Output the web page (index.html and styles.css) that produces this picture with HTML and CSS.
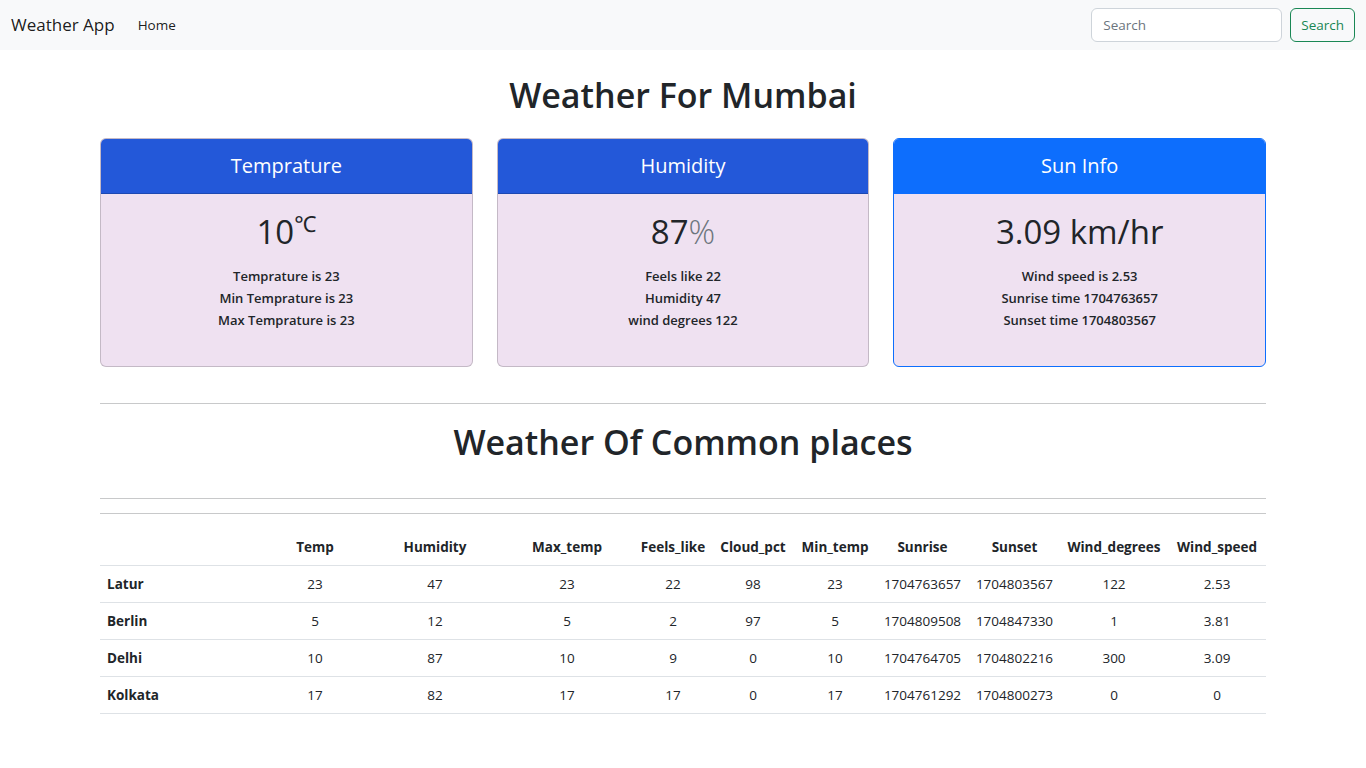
FILE: index.html
```html
<!DOCTYPE html>
<html lang="en">
<head>
<meta charset="utf-8">
<title>Weather App</title>
<link rel="stylesheet" href="styles.css">
</head>
<body>
<nav class="navbar">
  <div class="nav-left">
    <a class="brand" href="#">Weather App</a>
    <a class="nav-link" href="#">Home</a>
  </div>
  <form class="search-form">
    <input class="search-input" type="search" placeholder="Search">
    <button class="search-btn" type="button">Search</button>
  </form>
</nav>

<main class="container">
  <h1 class="page-title">Weather For Mumbai</h1>
  <div class="cards">
    <div class="card">
      <div class="card-header">Temprature</div>
      <div class="card-body">
        <div class="big">10<sup class="unit">℃</sup></div>
        <p class="details">Temprature is 23<br>Min Temprature is 23<br>Max Temprature is 23</p>
      </div>
    </div>
    <div class="card">
      <div class="card-header">Humidity</div>
      <div class="card-body">
        <div class="big">87<span class="muted">%</span></div>
        <p class="details">Feels like 22<br>Humidity 47<br>wind degrees 122</p>
      </div>
    </div>
    <div class="card card-primary">
      <div class="card-header">Sun Info</div>
      <div class="card-body">
        <div class="big">3.09 km/hr</div>
        <p class="details">Wind speed is 2.53<br>Sunrise time 1704763657<br>Sunset time 1704803567</p>
      </div>
    </div>
  </div>

  <hr class="rule rule-top">
  <h1 class="page-title second">Weather Of Common places</h1>
  <hr class="rule rule-mid">

  <table class="weather-table">
    <colgroup>
      <col style="width:160px"><col style="width:110px"><col style="width:130px"><col style="width:134px">
      <col style="width:78px"><col style="width:82px"><col style="width:82px"><col style="width:93px">
      <col style="width:91px"><col style="width:108px"><col style="width:98px">
    </colgroup>
    <thead>
      <tr>
        <th></th><th>Temp</th><th>Humidity</th><th>Max_temp</th><th>Feels_like</th><th>Cloud_pct</th><th>Min_temp</th><th>Sunrise</th><th>Sunset</th><th>Wind_degrees</th><th>Wind_speed</th>
      </tr>
    </thead>
    <tbody>
      <tr><th>Latur</th><td>23</td><td>47</td><td>23</td><td>22</td><td>98</td><td>23</td><td>1704763657</td><td>1704803567</td><td>122</td><td>2.53</td></tr>
      <tr><th>Berlin</th><td>5</td><td>12</td><td>5</td><td>2</td><td>97</td><td>5</td><td>1704809508</td><td>1704847330</td><td>1</td><td>3.81</td></tr>
      <tr><th>Delhi</th><td>10</td><td>87</td><td>10</td><td>9</td><td>0</td><td>10</td><td>1704764705</td><td>1704802216</td><td>300</td><td>3.09</td></tr>
      <tr><th>Kolkata</th><td>17</td><td>82</td><td>17</td><td>17</td><td>0</td><td>17</td><td>1704761292</td><td>1704800273</td><td>0</td><td>0</td></tr>
    </tbody>
  </table>
</main>
</body>
</html>
```

FILE: styles.css
```css
* { box-sizing: border-box; }

body {
  margin: 0;
  font-family: "Open Sans", "Noto Sans", sans-serif;
  font-size: 16px;
  line-height: 1.5;
  color: #212529;
  background: #fff;
}

.navbar {
  height: 50px;
  background: #f8f9fa;
  display: flex;
  align-items: center;
  justify-content: space-between;
  padding: 0 11px 0 11px;
}

.nav-left {
  display: flex;
  align-items: center;
}

.brand {
  font-size: 17px;
  color: rgba(0, 0, 0, 0.9);
  text-decoration: none;
  margin-right: 23px;
}

.nav-link {
  font-size: 13.5px;
  color: rgba(0, 0, 0, 0.9);
  text-decoration: none;
  padding-top: 1px;
}

.search-form {
  display: flex;
  align-items: center;
  gap: 8px;
}

.search-input {
  width: 191px;
  height: 34px;
  border: 1px solid #ced4da;
  border-radius: 6px;
  padding: 0 11px;
  font-family: inherit;
  font-size: 13.5px;
  color: #212529;
  background: #fff;
}

.search-input::placeholder { color: #6c757d; }

.search-btn {
  height: 34px;
  padding: 0 10px;
  border: 1px solid #198754;
  border-radius: 6px;
  background: transparent;
  color: #198754;
  font-family: inherit;
  font-size: 13.5px;
}

.container {
  padding: 0 100px;
}

.page-title {
  font-size: 34px;
  font-weight: 600;
  line-height: 48px;
  text-align: center;
  margin: 21px 0 19px;
}

.cards {
  display: grid;
  grid-template-columns: repeat(3, 1fr);
  gap: 24px;
}

.card {
  border: 1px solid rgba(0, 0, 0, 0.175);
  border-radius: 6px;
  overflow: hidden;
  background: #efe1f1;
  display: flex;
  flex-direction: column;
  height: 229px;
}

.card-header {
  background: #2358d9;
  color: #fff;
  text-align: center;
  font-size: 20px;
  line-height: 30px;
  padding: 12px 0 12px;
  border-bottom: 1px solid rgba(0, 0, 0, 0.175);
}

.card-primary { border-color: #0d6efd; }
.card-primary .card-header { background: #0d6efd; border-bottom-color: #0d6efd; }

.card-body {
  text-align: center;
  padding: 14px 16px 16px;
}

.big {
  font-size: 33px;
  font-weight: 500;
  line-height: 48px;
  margin-bottom: 9px;
}

.unit {
  font-size: 22px;
  font-weight: 400;
  vertical-align: top;
  line-height: 1;
  position: relative;
  top: 4px;
}

.muted {
  color: #6c757d;
  font-weight: 300;
}

.details {
  margin: 0;
  font-size: 13px;
  font-weight: 600;
  line-height: 22px;
}

.rule {
  border: 0;
  border-top: 1px solid #c8c9ca;
  margin: 0;
}

.rule-top { margin-top: 36px; }

.page-title.second {
  margin: 14px 0 32px;
}

.rule-mid { margin-bottom: 14px; }

.weather-table {
  width: 100%;
  border-collapse: collapse;
  table-layout: fixed;
  font-size: 13.5px;
  border-top: 1px solid #c8c9ca;
}

.weather-table th,
.weather-table td {
  padding: 8px 0;
  line-height: 20px;
  text-align: center;
  border-bottom: 1px solid #dee2e6;
  white-space: nowrap;
}

.weather-table td { font-weight: 500; }

.weather-table thead th {
  height: 52px;
  vertical-align: bottom;
  padding-bottom: 8px;
  font-weight: 700;
}

.weather-table tbody th {
  text-align: left;
  padding-left: 7px;
  font-weight: 700;
}
```
